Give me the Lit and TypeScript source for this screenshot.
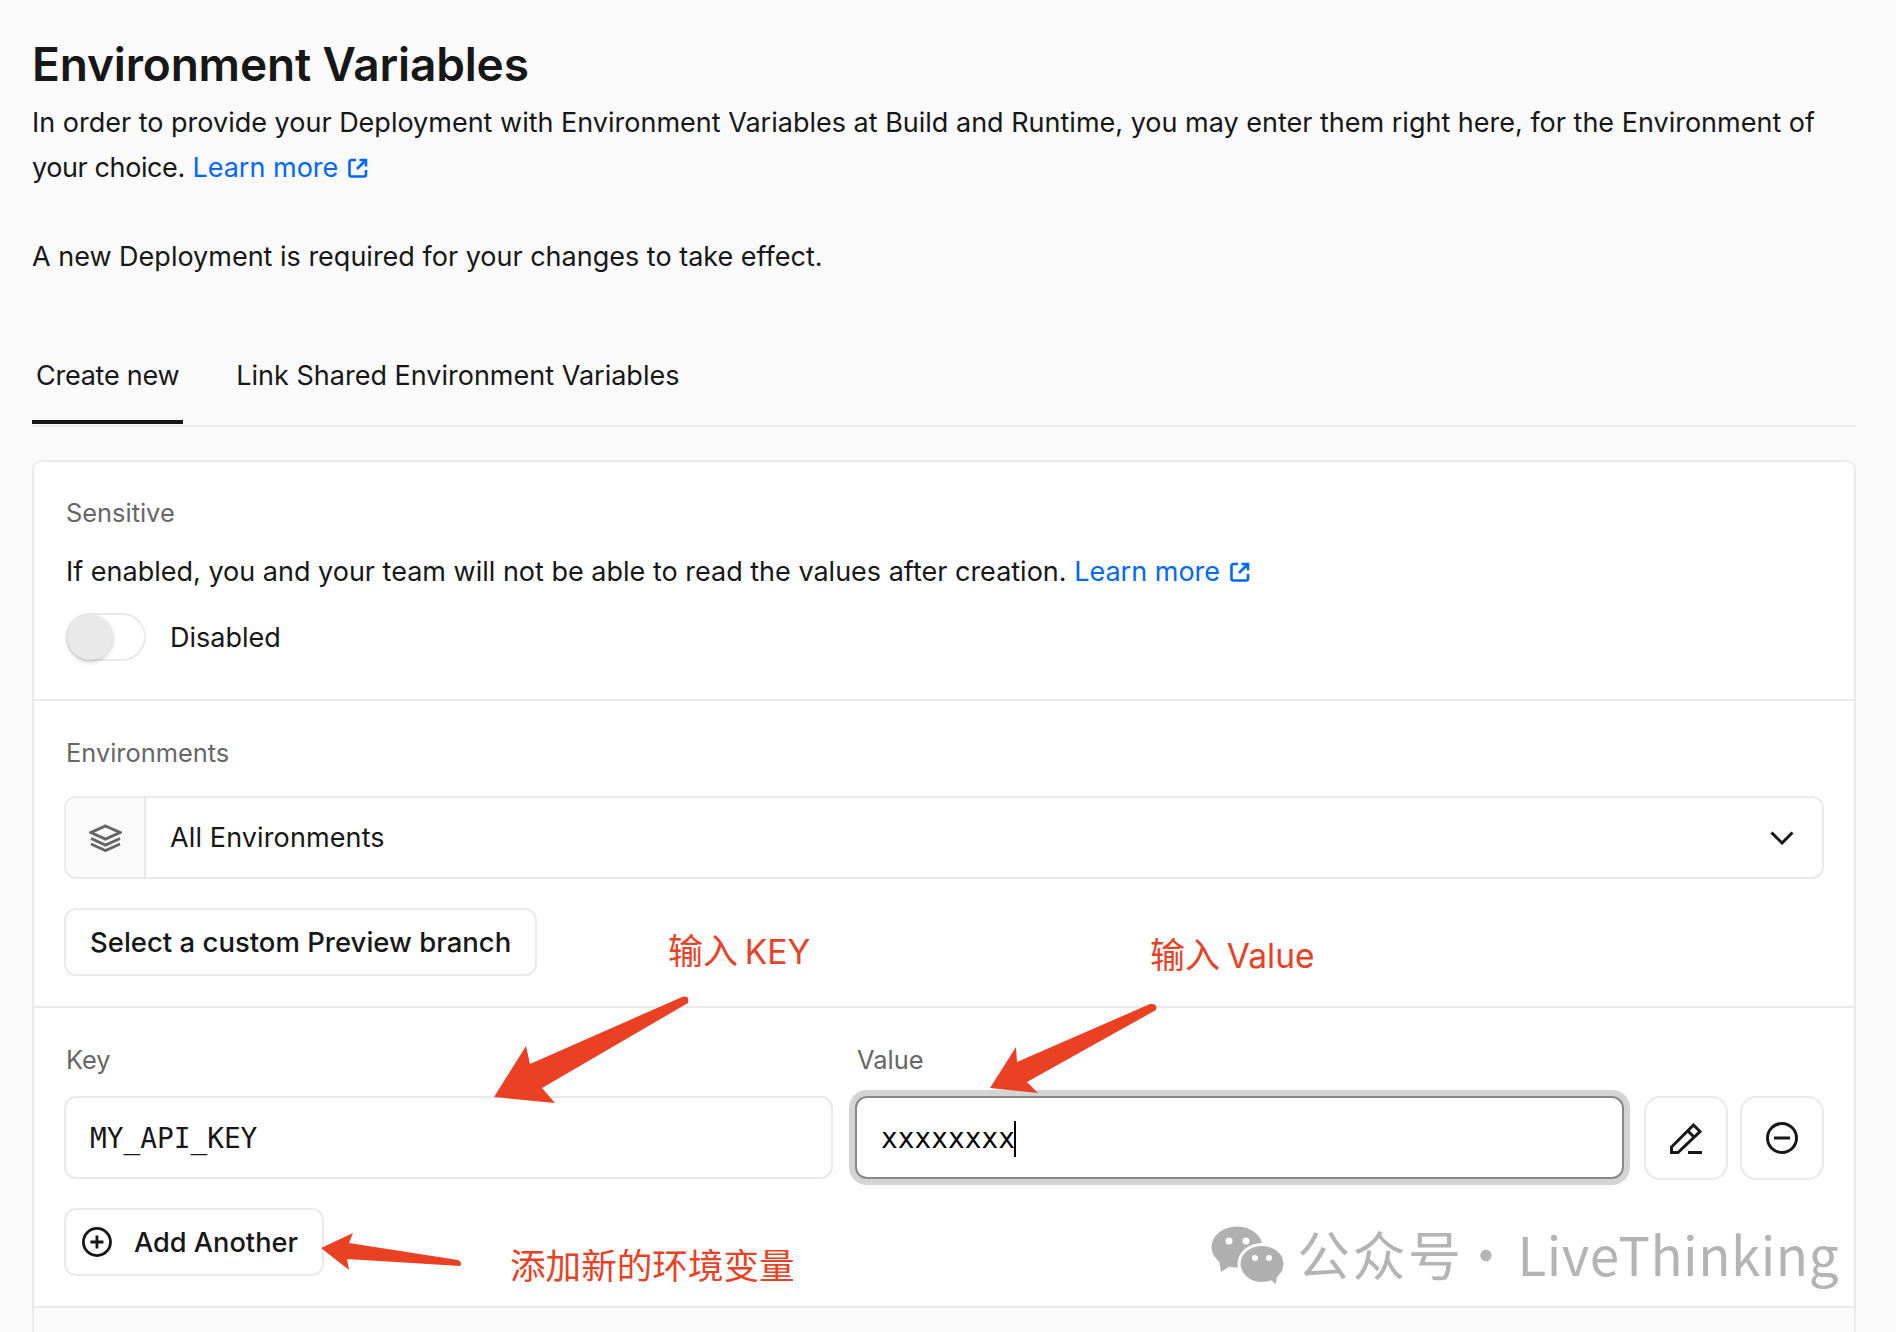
import { LitElement, html, css, svg } from "lit";
import { customElement } from "lit/decorators.js";

const extIcon = html`<svg class="ext" width="20" height="20" viewBox="0 0 20 20" fill="none" stroke="#0068ff" stroke-width="2.6"><path d="M8 2H3.5A2 2 0 0 0 1.5 4V16.5A2 2 0 0 0 3.5 18.5H16A2 2 0 0 0 18 16.5V12"/><path d="M9 11L17 3M11.5 2H18V8.5" /></svg>`;

const arrows = svg`
  <g fill="#ea4125">
    <path d="M494 1097L526 1046L530 1064L682 997Q690 995 688 1003L542 1088L555 1103Z"/>
    <path d="M990 1088L1016 1047L1017 1062L1150 1004Q1158 1003 1156 1010L1027 1082L1038 1093Z"/>
    <path d="M321 1248L353 1233L349 1243L458 1260Q463 1263 460 1266L347 1259L349 1270Z"/>
  </g>
  <g fill="#b0b0b0">
    <ellipse cx="1237" cy="1247" rx="25.5" ry="20.5"/>
    <path d="M1219 1260L1221 1272L1232 1265Z"/>
    <ellipse cx="1262" cy="1264" rx="23" ry="19.5" stroke="#fff" stroke-width="3"/>
    <path d="M1268 1278L1276 1284L1277 1274Z"/>
    <g fill="#fff">
      <circle cx="1229" cy="1241" r="3.5"/><circle cx="1246" cy="1241" r="3.5"/>
      <circle cx="1255" cy="1258" r="3"/><circle cx="1269" cy="1258" r="3"/>
    </g>
  </g>`;

@customElement("app-root")
export class AppRoot extends LitElement {
  static styles = css`
    :host {
      display: block;
      position: relative;
      width: 1896px;
      height: 1332px;
      overflow: hidden;
      background: #fafafa;
      color: #171717;
      font-family: Inter, "Noto Sans", sans-serif;
      font-size: 27px;
    }
    .page {
      display: flex;
      flex-direction: column;
      height: 100%;
      box-sizing: border-box;
      padding: 36px 40px 0 32px;
    }
    h1 {
      margin: 0;
      font-size: 46px;
      line-height: 56px;
      font-weight: 600;
      letter-spacing: -0.15px;
      height: 64px;
    }
    .intro {
      margin: 0;
      line-height: 45px;
    }
    .intro + .intro {
      margin-top: 44px;
    }
    .tight {
      letter-spacing: -0.4px;
    }
    a {
      color: #0068ff;
      text-decoration: none;
    }
    .ext {
      margin-left: 10px;
      vertical-align: -1px;
    }
    .tabs {
      display: flex;
      gap: 49px;
      height: 85px;
      margin-top: 61px;
      border-bottom: 2px solid #eaeaea;
    }
    .tab {
      padding: 18px 2px 0 4px;
      height: 62px;
      line-height: 36px;
    }
    .tab.active {
      padding-right: 4px;
      border-bottom: 4px solid #171717;
      letter-spacing: -0.25px;
    }
    .card {
      flex: 1;
      margin-top: 33px;
      border: 2px solid #eaeaea;
      border-bottom: 0;
      border-radius: 10px 10px 0 0;
      display: flex;
      flex-direction: column;
    }
    .section {
      background: #fff;
      padding: 36px 30px 0;
      border-bottom: 2px solid #eaeaea;
      box-sizing: border-box;
    }
    .section:first-child {
      padding-top: 35px;
      border-radius: 8px 8px 0 0;
    }
    .s1 { height: 239px; }
    .s2 { height: 307px; }
    .s3 { height: 300px; }
    .label {
      color: #666;
      font-size: 25.4px;
      line-height: 32px;
      padding-left: 2px;
    }
    .desc {
      margin: 23px 0 0 2px;
      line-height: 40px;
    }
    .toggle-row {
      display: flex;
      align-items: center;
      gap: 24px;
      margin: 21px 0 0 2px;
    }
    .toggle {
      width: 80px;
      height: 48px;
      box-sizing: border-box;
      border: 2px solid #eaeaea;
      border-radius: 24px;
      background: #fff;
      position: relative;
    }
    .knob {
      position: absolute;
      left: -1px;
      top: -1px;
      width: 46px;
      height: 46px;
      border-radius: 50%;
      background: #e9e9e9;
      box-shadow: 0 2px 4px rgba(0, 0, 0, 0.2);
    }
    .select {
      display: flex;
      align-items: center;
      height: 83px;
      box-sizing: border-box;
      margin-top: 27px;
      border: 2px solid #eaeaea;
      border-radius: 12px;
      background: #fff;
    }
    .select-icon {
      display: flex;
      align-items: center;
      justify-content: center;
      width: 80px;
      height: 100%;
      box-sizing: border-box;
      background: #fafafa;
      border-right: 2px solid #eaeaea;
      border-radius: 10px 0 0 10px;
    }
    .select-text {
      flex: 1;
      padding-left: 24px;
      letter-spacing: 0.12px;
    }
    .chev {
      margin-right: 28px;
    }
    .btn {
      display: inline-flex;
      align-items: center;
      height: 68px;
      box-sizing: border-box;
      border: 2px solid #eaeaea;
      border-radius: 12px;
      background: #fff;
      font-weight: 500;
    }
    .preview {
      margin-top: 29px;
      padding: 0 24px;
      width: 473px;
      font-size: 27.5px;
      white-space: nowrap;
    }
    .row {
      display: flex;
    }
    .fields {
      flex: 1;
      display: flex;
      gap: 22px;
    }
    .field {
      flex: 1;
    }
    .input {
      display: flex;
      align-items: center;
      height: 83px;
      box-sizing: border-box;
      margin-top: 20px;
      padding: 2px 0 0 24px;
      border: 2px solid #eaeaea;
      border-radius: 12px;
      background: #fff;
      font-family: "DejaVu Sans Mono", monospace;
      font-size: 27.8px;
    }
    .input.focus {
      border-color: #888;
      box-shadow: 0 0 0 6px #d4d4d4;
      color: #000;
    }
    .caret {
      display: inline-block;
      width: 2px;
      height: 36px;
      margin-left: -1px;
      background: #000;
    }
    .actions {
      display: flex;
      gap: 12px;
      margin: 52px 0 0 20px;
    }
    .square {
      display: flex;
      align-items: center;
      justify-content: center;
      width: 84px;
      height: 84px;
      box-sizing: border-box;
      border: 2px solid #eaeaea;
      border-radius: 16px;
      background: #fff;
    }
    .add {
      margin-top: 28px;
      padding: 0 24px 0 16px;
      width: 260px;
      gap: 22px;
      font-size: 27.2px;
      white-space: nowrap;
    }
    .overlay {
      position: absolute;
      left: 0;
      top: 0;
      pointer-events: none;
    }
    .note {
      position: absolute;
      color: #ea4125;
      font-family: Inter, "Noto Sans CJK SC", sans-serif;
      font-size: 35px;
      line-height: 44px;
      white-space: nowrap;
      word-spacing: -3px;
    }
    .latin {
      font-size: 33.5px;
    }
    .n1 { left: 668px; top: 929px; }
    .n2 { left: 1150px; top: 933px; }
    .n3 { left: 510px; top: 1245px; font-size: 35.6px; }
    .wm {
      position: absolute;
      display: flex;
      align-items: center;
      color: #b4b4b4;
      font-family: "Noto Sans CJK SC", "Noto Sans", sans-serif;
      font-size: 53px;
      line-height: 70px;
      white-space: nowrap;
      left: 1297px;
      top: 1218px;
    }
    .wm-cn {
      letter-spacing: 2.5px;
    }
    .wm-dot {
      margin: 0 5px 0 -4px;
    }
    .wm-en {
      letter-spacing: 0.5px;
    }
  `;

  render() {
    return html`
      <div class="page">
        <h1>Environment Variables</h1>
        <p class="intro">
          In order to provide your Deployment with Environment Variables at Build and Runtime, you may enter them right here, for the Environment of <span class="tight">your choice.</span>
          <a href="#">Learn more${extIcon}</a>
        </p>
        <p class="intro">A new Deployment is required for your changes to take effect.</p>
        <div class="tabs">
          <div class="tab active">Create new</div>
          <div class="tab">Link Shared Environment Variables</div>
        </div>
        <div class="card">
          <div class="section s1">
            <div class="label">Sensitive</div>
            <p class="desc">If enabled, you and your team will not be able to read the values after creation. <a href="#">Learn more${extIcon}</a></p>
            <div class="toggle-row">
              <div class="toggle"><div class="knob"></div></div>
              <span>Disabled</span>
            </div>
          </div>
          <div class="section s2">
            <div class="label">Environments</div>
            <div class="select">
              <div class="select-icon">
                <svg width="33" height="28" viewBox="0 0 33 28" fill="none" stroke="#666" stroke-width="3">
                  <path d="M16.5 2L31 8.5L16.5 15L2 8.5Z"/>
                  <path d="M2 14.5L16.5 21L31 14.5M2 20L16.5 26.5L31 20"/>
                </svg>
              </div>
              <div class="select-text">All Environments</div>
              <svg class="chev" width="24" height="14" viewBox="0 0 24 14" fill="none" stroke="#171717" stroke-width="3"><path d="M1.5 1.5L12 12L22.5 1.5"/></svg>
            </div>
            <div class="btn preview">Select a custom Preview branch</div>
          </div>
          <div class="section s3">
            <div class="row">
              <div class="fields">
                <div class="field">
                  <div class="label">Key</div>
                  <div class="input">MY_API_KEY</div>
                </div>
                <div class="field">
                  <div class="label">Value</div>
                  <div class="input focus">xxxxxxxx<span class="caret"></span></div>
                </div>
              </div>
              <div class="actions">
                <div class="square">
                  <svg width="32" height="31" viewBox="0 0 32 31" fill="none" stroke="#171717" stroke-width="3">
                    <path d="M1.5 29.5V24L23.5 2L30 8.5L8 29.5Z"/>
                    <path d="M18 8L24.5 14.5M18 29.5H32"/>
                  </svg>
                </div>
                <div class="square">
                  <svg width="32" height="32" viewBox="0 0 32 32" fill="none" stroke="#171717" stroke-width="3">
                    <circle cx="16" cy="16" r="14.5"/><path d="M8 16H24"/>
                  </svg>
                </div>
              </div>
            </div>
            <div class="btn add">
              <svg width="32" height="32" viewBox="0 0 32 32" fill="none" stroke="#171717" stroke-width="3">
                <circle cx="16" cy="16" r="14.5"/><path d="M9 16H23M16 9V23"/>
              </svg>
              <span>Add Another</span>
            </div>
          </div>
        </div>
      </div>
      <svg class="overlay" width="1896" height="1332" viewBox="0 0 1896 1332">${arrows}</svg>
      <div class="note n1">输入 <span class="latin">KEY</span></div>
      <div class="note n2">输入 <span class="latin">Value</span></div>
      <div class="note n3">添加新的环境变量</div>
      <div class="wm"><span class="wm-cn">公众号</span><span class="wm-dot">·</span><span class="wm-en">LiveThinking</span></div>
    `;
  }
}
